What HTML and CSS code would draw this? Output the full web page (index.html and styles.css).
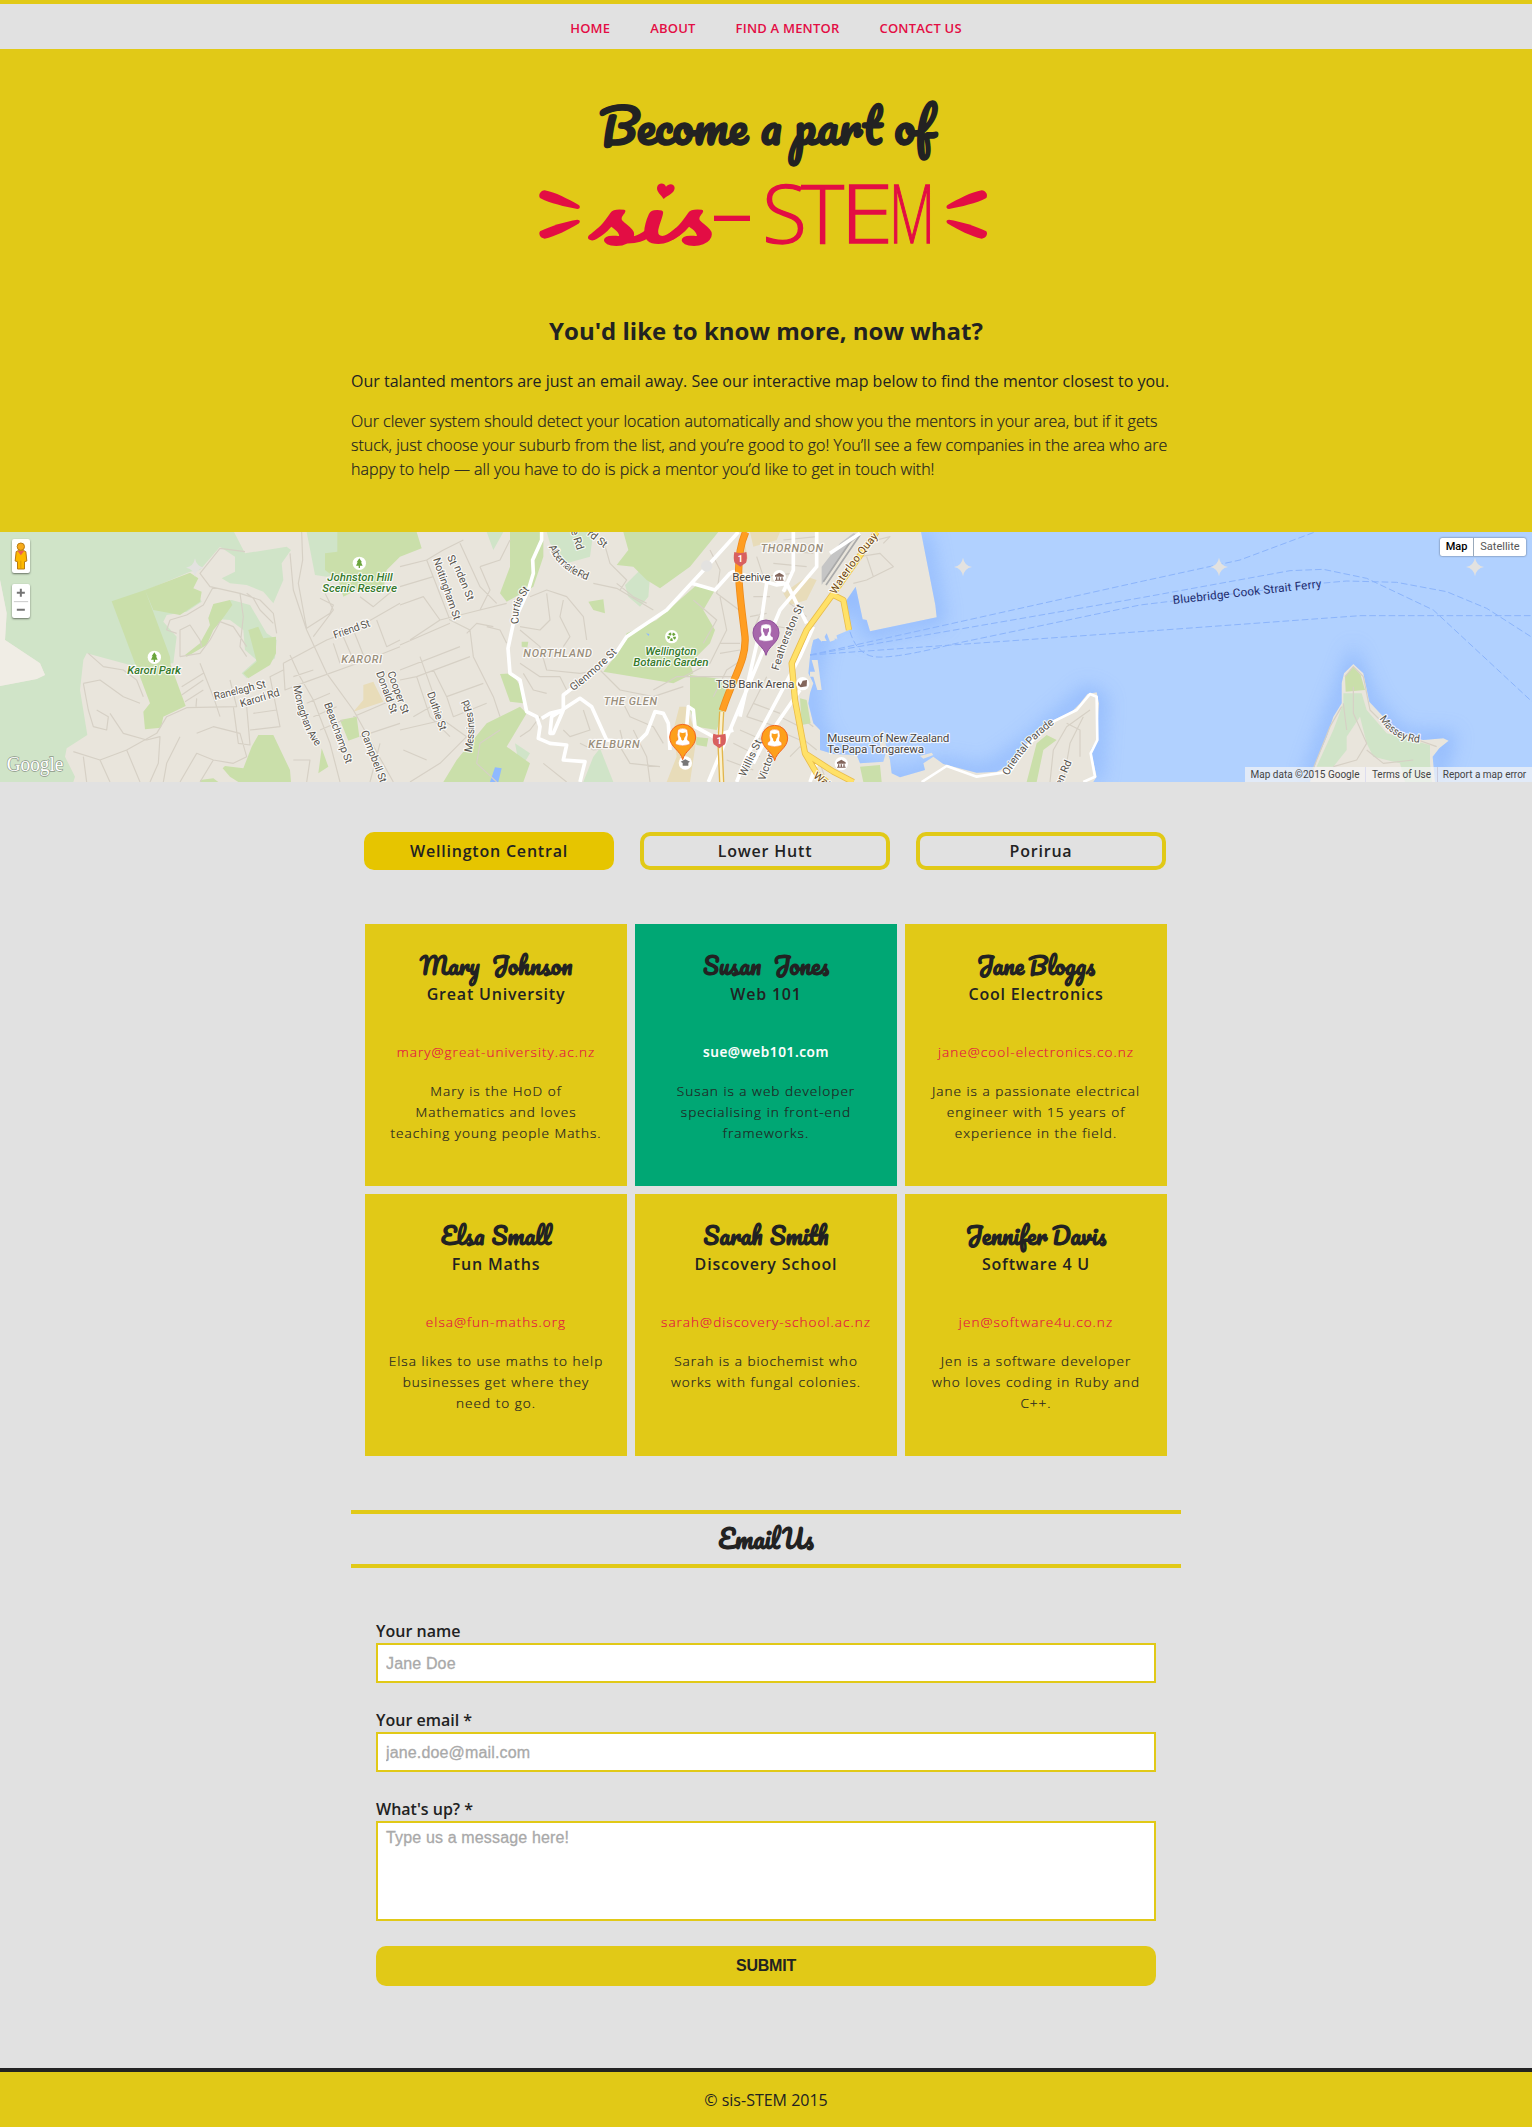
FILE: index.html
```html
<!DOCTYPE html>
<html lang="en">
<head>
<meta charset="utf-8">
<title>sis-STEM | Find a mentor</title>
<link rel="stylesheet" href="styles.css">
</head>
<body>
<nav class="nav">
  <a class="nav-link" href="#">HOME</a>
  <a class="nav-link" href="#">ABOUT</a>
  <a class="nav-link" href="#">FIND A MENTOR</a>
  <a class="nav-link" href="#">CONTACT US</a>
</nav>

<header class="hero">
  <h1 class="hero-title">Become a part of</h1>
  <svg class="logo" viewBox="96 510 1404 255" role="img" aria-label="sis-STEM">
    <g class="logo-shape">
      <path d="M134 571C122 572 114 584 120 594C150 610 195 620 232 627C242 626 241 617 235 614C205 598 165 576 134 571Z"/>
      <path d="M134 716C122 715 114 703 120 694C150 678 195 665 232 659C242 660 241 667 235 671C205 689 165 709 134 716Z"/>
      <path d="M1445 571C1457 572 1465 584 1459 594C1429 610 1384 620 1347 627C1337 626 1338 617 1344 614C1374 598 1414 576 1445 571Z"/>
      <path d="M1445 716C1457 715 1465 703 1459 694C1429 678 1384 665 1347 659C1337 660 1338 667 1344 671C1374 689 1414 709 1445 716Z"/>
      <path d="M491 597C483 584 470 576 471 563C473 548 493 546 498 560C505 549 524 550 524 564C523 580 504 585 491 597Z"/>
      <rect x="642" y="647" width="108" height="16"/>
    </g>
    <text class="logo-script" x="268" y="732" textLength="370" lengthAdjust="spacingAndGlyphs">sıs</text>
    <g class="logo-caps">
      <text x="787 904" y="729">ST</text>
      <text x="1020" y="729" textLength="160" lengthAdjust="spacingAndGlyphs">E</text>
      <text x="1167" y="729" textLength="138" lengthAdjust="spacingAndGlyphs">M</text>
    </g>
  </svg>
  <div class="hero-copy">
    <h2 class="hero-subtitle">You'd like to know more, now what?</h2>
    <p class="hero-lead">Our talanted mentors are just an email away. See our interactive map below to find the mentor closest to you.</p>
    <p class="hero-text">Our clever system should detect your location automatically and show you the mentors in your area, but if it gets stuck, just choose your suburb from the list, and you’re good to go! You’ll see a few companies in the area who are happy to help — all you have to do is pick a mentor you’d like to get in touch with!</p>
  </div>
</header>

<section class="map">
  <svg class="map-canvas" viewBox="0 6 4596 750" preserveAspectRatio="none">
    <defs>
      <filter id="shore" x="-20%" y="-20%" width="140%" height="140%"><feGaussianBlur stdDeviation="28"/></filter>
      <g id="tree"><circle r="20" fill="#fff"/><path d="M0-15L8-3H5L10 7H2V14H-2V7H-10L-5-3H-8Z" fill="#6ba53c"/></g>
      <g id="shield"><path d="M-18-20Q0-14 18-20Q22 0 17 12Q8 18 0 24Q-8 18-17 12Q-22 0-18-20Z" fill="#d8605f"/><text class="shield-no" y="10">1</text></g>
      <g id="museum"><circle r="20" fill="#fff"/><path d="M-13-4L0-12L13-4V0H-13ZM-10 2H-6V9H-10ZM-2 2H2V9H-2ZM6 2H10V9H6ZM-13 9H13V12H-13Z" fill="#83665c"/></g>
      <g id="pin"><path d="M0 64C-6 36-39 27-39-4A39 38 0 0 1 39-4C39 27 6 36 0 64Z" stroke-width="3"/><path d="M-14-26Q0-34 14-26Q18-10 14 0Q12 6 21 10V18Q0 26-21 18V10Q-12 6-14 0Q-18-10-14-26Z" fill="#fff"/><path class="pin-face" d="M-9-18Q0-14 9-18L9-8Q4-2 4 4L0 7L-4 4Q-4-2-9-8Z"/></g>
      <path id="star" d="M0-28Q4-4 27 0Q4 4 0 28Q-4 4-27 0Q-4-4 0-28Z" fill="#e3e2e0"/>
      <path id="albemarle" d="M1646 50Q1680 130 1785 158"/>
      <path id="curtis" d="M1558 280Q1545 230 1595 172"/>
      <path id="glenmore" d="M1720 484Q1790 430 1856 364"/>
      <path id="monaghan" d="M880 468Q900 590 950 652"/>
      <path id="messines" d="M1414 668Q1436 570 1400 500"/>
      <path id="feather" d="M2336 422Q2360 330 2415 222"/>
      <path id="quay" d="M2508 194Q2540 130 2640 14"/>
      <path id="oriental" d="M3024 738Q3080 640 3168 578"/>
      <path id="massey" d="M4138 566Q4180 635 4264 638"/>
      <path id="ferry" d="M3520 222L3970 172"/>
    </defs>

    <rect class="land" y="6" width="4596" height="750"/>

    <!-- hills -->
    <path class="hill" d="M0 6H702L735 70L860 50L873 60L845 100L850 150L820 220L790 185L740 165L690 160L665 145L705 125L705 80L660 50L600 120L570 125L440 180L590 190L605 215L560 245L500 255L490 275L530 320L520 400L390 405L260 370L250 390L240 480L262 615L200 655L195 680L225 740L220 756H0ZM0 150L20 250L15 330L120 400L135 435L110 447L0 468Z" fill-rule="evenodd"/>
    <path class="hill" d="M695 210L750 225L800 310L830 330L825 385L740 445L725 430L770 390L735 360L730 300L690 270L625 265L640 225ZM920 6H1020V130L980 140L945 135ZM1640 6H1780L1770 80L1700 100L1670 60L1650 40ZM1875 165L1920 120L1950 140L1945 200L1920 230L1885 200ZM1780 680L1800 655L1840 756H1750ZM1545 640L1590 670L1560 720ZM1460 6H1510L1480 60Z"/>
    <path class="pale" d="M0 150L20 250L15 330L120 400L135 435L110 447L0 468Z"/>

    <!-- parks -->
    <path class="park" d="M335 214L435 180L510 380L512 405L557 528L490 560L483 593L435 598L430 545L450 520ZM435 180L570 128L595 145L580 175L605 185L600 215L540 255L460 240ZM640 222L690 210L697 225L665 270L640 300L620 345L560 380L555 375L600 340L630 285L625 265ZM745 300L775 290L790 325L828 320V370L810 405L745 445L730 430L770 395ZM775 615H820L870 720L873 756H715L690 740L668 715L675 708L730 715L755 650ZM1012 6H1200V80L1160 120L1150 180L1080 175L1030 200L1015 150L975 120V70L1012 65ZM1020 570L1070 560L1078 620L1045 632ZM965 655L985 710L955 730ZM600 750L640 745L655 756H600Z"/>
    <path class="park" d="M1200 6H1250L1265 55L1200 80ZM1530 6H1630V80L1600 170L1520 215L1500 190L1530 110ZM1870 6H2155L2070 110L1980 175L1940 150L1900 110L1850 105L1885 60ZM1765 215L1810 208L1815 250L1780 240ZM2090 165L2145 180L2110 240L2145 300L2130 340L2070 400L2080 430L2020 460L1810 425L1860 360L1880 310L1970 270ZM1500 432L1535 430L1570 480V520L1530 515ZM2070 435L2190 450L2185 500L2150 600L2090 590L2070 540ZM1330 756L1370 690L1460 580L1560 530L1580 550L1520 650L1590 700L1570 756ZM2080 620L2125 625L2120 650L2090 645ZM1565 335L1585 335L1582 352L1565 350Z"/>
    <path class="built" d="M1090 465L1120 455L1150 515L1060 545L1090 510ZM2038 530L2060 530L2090 620L2070 756H2000L2030 680L2020 600ZM2250 6H2340L2330 30L2260 50ZM2350 190L2420 140L2450 150L2420 210L2370 225ZM2230 20L2245 90L2230 70Z"/>
    <path class="lake" d="M1470 756L1485 712L1505 715L1495 756ZM1938 310L1948 312L1946 318Z"/>

    <!-- minor streets -->
    <path class="lane" d="M735 65L660 55L600 130L630 170L720 190L730 260L720 350L740 380M720 190L780 210L820 250L830 310M870 70L880 180L900 240L920 300L980 430L1060 540L1180 756M905 6L908 90L895 160L915 270L920 295L990 250L1000 225L960 205M850 400L980 330L1060 300L1200 220M870 375L900 440L940 510L990 640L1020 756M850 400L855 480L920 455L1100 390L1200 350M700 530L715 640L750 645L740 530M540 380L600 370L630 330L660 275L700 290L740 350M540 380L540 300L570 285L600 330L605 350M600 400L640 500L660 560M690 450L710 530L560 533L500 560L470 610L380 660L300 690L220 665M265 370L310 410L370 420L410 450L430 500M250 460L300 450L370 500L420 520M250 460L265 540L280 590L320 600L325 560L290 540M330 550L370 610L440 630L480 620L475 700L450 756M380 660L420 756M540 620L500 700L490 756M590 610L640 590L720 610L740 680L700 700L640 690L590 670L540 756M830 540L840 590L750 600M830 540L760 550M610 430L545 470M610 450L545 495M610 480L555 515M590 505L588 530M850 420L810 440L830 540M880 440L940 420M920 520L990 490M940 560L1010 530M960 600L1030 570M1080 620L1200 580M1060 560L1200 500M1140 640L1110 756M975 190L1000 240L940 320M1130 270L1160 350L1200 330M1060 300L1100 400M1030 320L1060 390M1000 340L1020 400M1080 200L1120 230L1180 180M880 690L930 690L920 756M640 690L600 756M250 680L260 756M300 690L330 756M510 270L560 255L610 225L640 170M510 270L500 300L530 310M740 190L760 205L780 240L820 280"/>
    <path class="lane" d="M1200 110L1280 90L1330 60L1390 30M1200 170L1300 140M1200 225L1270 200L1320 270L1230 330M1280 90L1350 270L1410 300L1420 380L1480 500L1500 560M1320 270L1440 240L1520 220M1350 280L1200 345M1380 350L1200 420M1410 380L1250 440L1200 450M1250 440L1290 560L1350 620M1300 420L1340 500L1450 460M1340 500L1360 560L1460 520M1260 380L1310 520L1240 560M1200 600L1330 570L1400 620L1320 700L1230 756M1210 660L1280 690M1440 110L1470 180L1440 240M1440 110L1500 90L1530 30M1380 40L1440 170L1490 220M1460 290L1500 300L1520 340M1400 310L1430 280L1480 290M1590 200L1640 180L1700 200L1750 260L1760 330M1640 190L1650 270L1620 300L1560 290M1560 300L1620 350L1640 420L1740 430M1690 210L1680 260L1710 320L1690 350M1560 400L1620 440L1680 440L1700 480M1570 430L1600 480L1640 490M1850 160L1900 200L1940 220M1810 30L1830 100L1880 150L1860 180M1780 160L1850 175L1960 240M1740 430L1800 420L1860 480L1960 500L2050 470M1860 500L1890 560L1960 590L1990 640M1750 540L1770 600L1710 620L1690 600M1740 640L1780 660L1860 650L1890 700L1980 710M1900 600L1940 680L1950 756M1860 600L1870 640M1630 700L1700 756M1620 560L1590 600L1560 620M1500 600L1440 640L1430 700L1490 756M2130 60L2160 120L2150 190L2190 220L2230 250M2080 210L2150 270L2110 340M2160 200L2180 300L2130 400L2050 440M2240 380L2180 420L2140 500M2160 340L2220 340M2160 370L2220 360M2270 80L2290 140L2380 130M2250 260L2300 250M2260 200L2310 200M2280 280L2390 300M2300 160L2290 230L2260 300M2260 520L2340 550M2240 560L2330 590M2220 600L2310 640M2200 640L2280 680M2180 690L2260 720M2300 440L2240 560M2340 560L2400 590M2330 600L2400 630M2370 680L2400 650L2460 700M2350 30L2450 20M2330 60L2440 70M2320 100L2420 110M2420 260L2370 220M1960 480L2030 440L2200 440"/>
    <path class="lane" d="M2580 80L2640 70L2680 110L2600 150L2560 160M2650 40L2670 20L2630 30M2600 80L2620 140M3270 540L3200 590L3160 660L3150 756M3250 560L3210 640L3190 756M3200 580L3240 600L3240 680M2400 560L2440 590M2400 620L2450 660M2460 700L2480 756"/>

    <!-- harbour, drawn over the land with a darker shoreline -->
    <clipPath id="harbour"><path id="water" d="M2763 6L2806 225L2810 262L2610 304L2600 270L2588 268L2567 170L2540 210L2528 230L2547 300L2500 320L2505 330L2520 325L2490 335L2480 310L2465 335L2455 325L2440 330L2435 350L2430 380L2425 430L2440 460L2430 490L2425 520L2440 580L2460 600L2460 660L2500 672L2570 675L2580 700L2650 695L2660 660L2670 690L2675 730L2700 742L2775 720L2770 700L2800 680L2830 702L2930 728L2990 725L3040 700L3080 640L3160 570L3215 545L3240 520L3262 492L3290 487L3297 520L3290 630L3272 660L3290 740L3280 756H3930L3950 690L3980 620L4000 560L4025 520V460L4032 430L4060 402L4090 430L4108 515L4150 560L4180 610L4270 630L4330 625L4346 632L4318 655L4298 680L4305 756H4596V6Z"/></clipPath>
    <use href="#water" fill="#b1d1ff"/>
    <g clip-path="url(#harbour)"><path class="shore" d="M2763 6L2810 262L2610 304L2567 170L2460 310L2430 450L2440 580L2500 690L2700 750L2830 710L2960 735L3080 650L3262 492L3297 510L3280 756M3930 756L4000 560L4060 402L4110 520L4200 625L4340 630L4300 756" filter="url(#shore)"/></g>
    <path class="land" d="M2435 390H2453L2465 480H2452L2440 440H2430V425H2445ZM2445 300L2460 295L2480 333H2466ZM2480 270L2492 250L2512 326H2495ZM2640 610L2650 600L2660 660H2640Z"/>
    <path class="land" d="M2760 678L2795 668L2800 675L2770 686Z"/>
    <path class="park" d="M2400 505L2420 510L2432 580L2405 585ZM3110 640L3140 615L3170 630L3130 660L3110 756H3080ZM4035 440L4060 410L4082 435L4095 480L4037 485ZM2580 710L2640 705L2645 756H2590Z"/>
    <path class="hill" d="M4030 490H4085L4100 540L4160 610L4290 645L4290 700L4296 756H4215L4200 700L4120 680L4100 640L4080 560L4040 620L4040 660L4000 710H3950L4000 600L4030 520Z"/>
    <path class="lane" d="M4035 440L4060 410L4090 440L4110 540L4170 600L4310 650M4025 530L3990 590L3930 740M4060 470V550L4100 640L4070 690L4000 710M4030 520L4040 600M4100 660L4150 700L4240 690"/>
    <path d="M2465 165L2540 50L2580 15L2560 10L2520 40L2465 110Z" fill="#c5c5c5"/>
    <path d="M2470 155L2565 15M2478 165L2580 15" fill="none" stroke="#aaa" stroke-width="5"/>

    <!-- main roads -->
    <path class="road" d="M1625 6V30L1598 90L1600 130L1585 180L1540 280L1524 355L1530 430L1560 450L1580 545L1610 560L1620 590L1615 625L1650 640L1700 645L1690 690L1755 695L1740 756M2215 6L2130 100L2000 240L1880 320L1840 380L1690 495V540L1650 550L1625 565M1690 540L1660 610H1650L1655 560L1740 505L1775 530L1820 630L1910 640L1940 610L1965 545L1990 550L2005 580L2010 660M2060 590L2065 530L2080 540L2085 590L2140 620L2200 600M2075 160L2145 180L2190 130L2200 125L2330 165L2360 160L2420 280M2380 6V120L2350 185M2450 6V110L2340 240L2240 480L2125 756M2490 70L2580 10M2300 160L2280 300L2220 560M2440 290L2400 380L2240 680L2210 756M2400 480L2290 640L2260 700M2450 700L2430 756"/>
    <path class="road-thin" d="M2765 756L2840 708L2930 740L3030 725L3090 640L3160 575L3230 540L3270 492L3290 500L3292 630L3272 670L3285 740L3250 756"/>
    <path d="M2165 545L2160 640L2165 756" class="gold-case"/><path d="M2165 545L2160 640L2165 756" class="gold-mid"/>
    <path class="yellow-case" d="M2630 6L2500 190L2420 300L2375 400L2385 510L2415 670L2450 730L2480 756M2415 670L2500 725L2560 756M2500 195L2530 210L2547 300"/>
    <path class="yellow" d="M2630 6L2500 190L2420 300L2375 400L2385 510L2415 670L2450 730L2480 756M2415 670L2500 725L2560 756M2500 195L2530 210L2547 300"/>
    <path class="highway-case" d="M2237 6C2200 90 2220 190 2235 320C2240 390 2200 440 2167 542"/>
    <path class="highway" d="M2237 6C2200 90 2220 190 2235 320C2240 390 2200 440 2167 542"/>

    <!-- ferry routes -->
    <path class="route" d="M2430 375L3430 153L3720 90L3945 6M2430 375L3430 202L3870 122L3970 118L4100 145L4300 240L4596 515M2550 305Q2570 370 2620 380Q2680 388 2860 342L3420 225L3960 160L4040 153L4190 157L4340 185L4460 235L4596 322M2430 375L3420 305L4080 257H4596"/>

    <!-- labels -->
    <g class="lbl street">
      <text textLength="115" transform="translate(1004 326) rotate(-19)">Friend St</text>
      <text textLength="160" transform="translate(644 510) rotate(-14)">Ranelagh St</text>
      <text textLength="122" transform="translate(724 532) rotate(-17)">Karori Rd</text>
      <text><textPath href="#monaghan" textLength="196">Monaghan Ave</textPath></text>
      <text textLength="192" transform="translate(972 522) rotate(70)">Beauchamp St</text>
      <text textLength="165" transform="translate(1082 606) rotate(69)">Campbell St</text>
      <text textLength="132" transform="translate(1128 428) rotate(70)">Donald St</text>
      <text textLength="134" transform="translate(1162 428) rotate(70)">Cooper St</text>
      <text textLength="194" transform="translate(1299 88) rotate(71)">Nottingham St</text>
      <text transform="translate(1341 80) rotate(68)">St</text>
      <text textLength="110" transform="translate(1362 112) rotate(68)">nden St</text>
      <text textLength="120" transform="translate(1281 490) rotate(71)">Duthie St</text>
      <text transform="translate(1712 2) rotate(72)">e Rd</text>
      <text transform="translate(1760 14) rotate(38)">rd St</text>
      <text><textPath href="#albemarle" textLength="158">Albemarle Rd</textPath></text>
      <text><textPath href="#curtis" textLength="110">Curtis St</textPath></text>
      <text><textPath href="#glenmore" textLength="176">Glenmore St</textPath></text>
      <text><textPath href="#messines" textLength="164">Messines Rd</textPath></text>
      <text><textPath href="#feather" textLength="208">Featherston St</textPath></text>
      <text class="amber"><textPath href="#quay" textLength="216">Waterloo Quay</textPath></text>
      <text><textPath href="#oriental" textLength="212">Oriental Parade</textPath></text>
      <text><textPath href="#massey" textLength="146">Massey Rd</textPath></text>
      <text textLength="118" transform="translate(2236 742) rotate(-65)">Willis St</text>
      <text transform="translate(2294 754) rotate(-70)">Victoria</text>
      <text transform="translate(3184 770) rotate(-67)">en Rd</text>
      <text class="amber" transform="translate(2438 742) rotate(36)">Wate</text>
    </g>
    <g class="lbl suburb">
      <text x="1024" y="398" textLength="122">KARORI</text>
      <text x="1570" y="381" textLength="206">NORTHLAND</text>
      <text x="1811" y="524" textLength="160">THE GLEN</text>
      <text x="1765" y="655" textLength="154">KELBURN</text>
      <text x="2282" y="66" textLength="187">THORNDON</text>
    </g>
    <g class="lbl green">
      <text x="982" y="152" textLength="196">Johnston Hill</text>
      <text x="967" y="185" textLength="224">Scenic Reserve</text>
      <text x="382" y="433" textLength="161">Karori Park</text>
      <text x="1936" y="374" textLength="154">Wellington</text>
      <text x="1900" y="407" textLength="226">Botanic Garden</text>
    </g>
    <g class="lbl poi">
      <text x="2197" y="152" textLength="114">Beehive</text>
      <text x="2147" y="473" textLength="236">TSB Bank Arena</text>
      <text x="2482" y="636" textLength="366">Museum of New Zealand</text>
      <text x="2482" y="669" textLength="290">Te Papa Tongarewa</text>
    </g>
    <text class="ferry-label"><textPath href="#ferry" textLength="448">Bluebridge Cook Strait Ferry</textPath></text>

    <use href="#tree" x="1078" y="100"/>
    <use href="#tree" x="463" y="382"/>
    <circle cx="2015" cy="320" r="20" fill="#fff"/><circle cx="2015" cy="320" r="9" fill="none" stroke="#6ba53c" stroke-width="8" stroke-dasharray="7 4"/>
    <use href="#museum" x="2338" y="140"/>
    <use href="#museum" x="2524" y="701"/>
    <circle cx="2408" cy="461" r="20" fill="#fff"/><path d="M2394 455L2402 465L2408 452L2421 450L2420 469L2402 472L2394 466Z" fill="#83665c"/>
    <circle cx="2056" cy="699" r="20" fill="#fff"/><path d="M2042 695L2056 688L2070 695L2065 698V707H2048V699Z" fill="#777"/>
    <use href="#shield" x="2221" y="86"/><use href="#shield" x="2158" y="631"/>
    <use href="#pin" x="2298" y="312" class="pin-purple"/>
    <use href="#pin" x="2048" y="625" class="pin-orange"/>
    <use href="#pin" x="2324" y="628" class="pin-orange"/>
    <use href="#star" x="2889" y="111"/><use href="#star" x="3657" y="111"/><use href="#star" x="4425" y="111"/><use href="#star" x="585" y="113"/>
    <circle cx="2120" cy="108" r="17" fill="#e3e2e0"/>
    <text class="google" x="20" y="722" textLength="170" lengthAdjust="spacingAndGlyphs">Google</text>
  </svg>

  <div class="map-zoom">
    <div class="pegman">
      <svg viewBox="0 0 51 102"><path d="M11 38Q25 28 40 38L43 66L36 68L36 90H15V68L8 66Z" fill="#fdb900" stroke="#b97b13" stroke-width="3"/><circle cx="25" cy="23" r="11" fill="#f7ab1c" stroke="#b97b13" stroke-width="3"/><path d="M15 36H35L25 49Z" fill="#ea5f55"/><path d="M25 65V88" stroke="#c98a0b" stroke-width="2"/></svg>
    </div>
    <div class="zoom-box">
      <svg viewBox="0 0 51 102"><path d="M13 26H37M25 14V38M13 77H37" stroke="#747474" stroke-width="6"/><path d="M4 53H47" stroke="#c9c9c9" stroke-width="3"/></svg>
    </div>
  </div>
  <div class="map-type"><span class="type-map">Map</span><span class="type-sat">Satellite</span></div>
  <div class="map-legal"><span class="legal-data">Map data ©2015 Google</span><span class="legal-terms">Terms of Use</span><span class="legal-report">Report a map error</span></div>
</section>

<main class="content">
  <div class="tabs">
    <a class="tab tab-active" href="#">Wellington Central</a>
    <a class="tab" href="#">Lower Hutt</a>
    <a class="tab" href="#">Porirua</a>
  </div>

  <div class="cards">
    <article class="card">
      <h3 class="name name-wide">Mary Johnson</h3>
      <h4 class="company">Great University</h4>
      <a class="email" href="#">mary@great-university.ac.nz</a>
      <p class="bio">Mary is the HoD of Mathematics and loves teaching young people Maths.</p>
    </article>
    <article class="card card-active">
      <h3 class="name name-wide">Susan Jones</h3>
      <h4 class="company">Web 101</h4>
      <a class="email" href="#">sue@web101.com</a>
      <p class="bio">Susan is a web developer specialising in front-end frameworks.</p>
    </article>
    <article class="card">
      <h3 class="name name-tight">Jane Bloggs</h3>
      <h4 class="company">Cool Electronics</h4>
      <a class="email" href="#">jane@cool-electronics.co.nz</a>
      <p class="bio">Jane is a passionate electrical engineer with 15 years of experience in the field.</p>
    </article>
    <article class="card">
      <h3 class="name">Elsa Small</h3>
      <h4 class="company">Fun Maths</h4>
      <a class="email" href="#">elsa@fun-maths.org</a>
      <p class="bio">Elsa likes to use maths to help businesses get where they need to go.</p>
    </article>
    <article class="card">
      <h3 class="name">Sarah Smith</h3>
      <h4 class="company">Discovery School</h4>
      <a class="email" href="#">sarah@discovery-school.ac.nz</a>
      <p class="bio">Sarah is a biochemist who works with fungal colonies.</p>
    </article>
    <article class="card">
      <h3 class="name name-tight">Jennifer Davis</h3>
      <h4 class="company">Software 4 U</h4>
      <a class="email" href="#">jen@software4u.co.nz</a>
      <p class="bio">Jen is a software developer who loves coding in Ruby and C++.</p>
    </article>
  </div>

  <h2 class="form-title">Email Us</h2>

  <form class="form">
    <label class="field"><span class="label">Your name</span><input class="input" type="text" placeholder="Jane Doe"></label>
    <label class="field"><span class="label">Your email *</span><input class="input" type="text" placeholder="jane.doe@mail.com"></label>
    <label class="field"><span class="label">What's up? *</span><textarea class="input message" placeholder="Type us a message here!"></textarea></label>
    <button class="submit" type="button">SUBMIT</button>
  </form>
</main>

<footer class="footer">© sis-STEM 2015</footer>
</body>
</html>
```
FILE: styles.css
```css
* { box-sizing: border-box; }

body {
  margin: 0;
  background: #e1e1e1;
  color: #222;
  font-family: "Open Sans", sans-serif;
  font-size: 16px;
}

h1, h2, h3, h4, p { margin: 0; }
a { text-decoration: none; color: inherit; }

.nav {
  display: flex;
  justify-content: center;
  gap: 40px;
  height: 49px;
  border-top: 4px solid #e1c917;
  color: #e30d44;
  font-size: 13px;
  font-weight: 600;
  letter-spacing: .2px;
  line-height: 48px;
}

.hero {
  height: 483px;
  padding-top: 46px;
  background: #e1c917;
}
.hero-title {
  font: bold 47px/60px Pacifico, "Liberation Serif", cursive;
  text-align: center;
}
.logo { display: block; width: 468px; height: 85px; margin: 15px auto 0; }
.logo-shape { fill: #e30d44; }
.logo-script { font: 220px Pacifico, "Liberation Serif", cursive; fill: #e30d44; }
.logo-caps { font: 300 245px "Open Sans", sans-serif; fill: #e30d44; stroke: #e30d44; stroke-width: 4px; }
.hero-copy { width: 830px; margin: 60px auto 0; }
.hero-subtitle { font-size: 24px; line-height: 32px; font-weight: 700; text-align: center; }
.hero-lead { margin-top: 21.5px; font-size: 16px; line-height: 24px; white-space: nowrap; }
.hero-text { margin-top: 16px; font-size: 16px; line-height: 24px; font-weight: 300; -webkit-text-stroke: .2px; }

.map { position: relative; height: 250px; overflow: hidden; font-family: Roboto, sans-serif; }
.map-canvas { display: block; width: 100%; height: 250px; }
.land { fill: #e9e5dc; }
.hill { fill: #d0e4c8; }
.pale { fill: #f0ede5; }
.park { fill: #cadfaa; }
.built { fill: #e8dcb9; }
.lake { fill: #8fb9ff; }
.lane { fill: none; stroke: #d6d0c5; stroke-width: 3.5; stroke-linejoin: round; }
.road { fill: none; stroke: #fff; stroke-width: 11; stroke-linejoin: round; }
.road-thin { fill: none; stroke: #fff; stroke-width: 8; stroke-linejoin: round; }
.shore { fill: none; stroke: #7ca9fb; stroke-width: 44; opacity: .6; }
.gold-case { fill: none; stroke: #e2b64c; stroke-width: 16; }
.gold-mid { fill: none; stroke: #faf0cf; stroke-width: 8; }
.yellow-case { fill: none; stroke: #e9bd4c; stroke-width: 19; stroke-linejoin: round; }
.yellow { fill: none; stroke: #ffe168; stroke-width: 14; stroke-linejoin: round; }
.highway-case { fill: none; stroke: #ee8c1c; stroke-width: 22; }
.highway { fill: none; stroke: #ff9e22; stroke-width: 17; }
.route { fill: none; stroke: #8bb4fb; stroke-width: 3; stroke-dasharray: 20 9; }
.lbl { font-family: Roboto, sans-serif; paint-order: stroke; stroke: #fff; stroke-opacity: .8; stroke-width: 7px; stroke-linejoin: round; }
.street { font-size: 32px; fill: #57534c; }
.amber { fill: #6b4310; }
.suburb { font-size: 33px; font-style: italic; font-weight: 500; fill: #9a8f7c; }
.green { font-size: 35px; font-style: italic; font-weight: 500; fill: #367a2c; }
.poi { font-size: 35px; fill: #4b4744; }
.ferry-label { font: 35px Roboto, sans-serif; fill: #1e2c6e; }
.shield-no { font: bold 27px Roboto, sans-serif; fill: #fff; text-anchor: middle; }
.pin-purple { fill: #a767ab; stroke: #8f4f9b; }
.pin-orange { fill: #fda01b; stroke: #f26522; }
.pin-face { stroke: none; }
.google { font: 62px "Liberation Serif", serif; fill: #fff; stroke: #8e998a; stroke-width: 4px; paint-order: stroke; }

.map-zoom { position: absolute; left: 12px; top: 7px; display: flex; flex-direction: column; gap: 11px; }
.pegman, .zoom-box { width: 18px; height: 34px; background: #fff; border-radius: 2px; box-shadow: 0 1px 2px rgba(0, 0, 0, .5); }
.pegman svg, .zoom-box svg { display: block; width: 18px; height: 34px; }
.map-type {
  position: absolute; right: 6px; top: 6px;
  display: flex;
  height: 18px;
  background: #fff;
  border-radius: 2px;
  box-shadow: 0 0 2px rgba(0, 0, 0, .6);
  font-size: 11px;
  line-height: 18px;
  text-align: center;
}
.type-map { width: 34px; font-weight: 500; color: #000; border-right: 1px solid #9ab; }
.type-sat { width: 52px; color: #565656; }
.map-legal {
  position: absolute; right: 0; bottom: 0;
  display: flex;
  width: 287px;
  height: 15px;
  background: rgba(245, 245, 245, .7);
  font-size: 10px;
  line-height: 15px;
  text-align: center;
  color: #444;
  white-space: nowrap;
}
.legal-data { width: 120px; }
.legal-terms { width: 72px; border-left: 1px solid #dde; }
.legal-report { width: 94px; border-left: 1px solid #ccd; }

.content { width: 830px; height: 1286px; margin: 0 auto; padding-top: 50px; }
.tabs { display: flex; gap: 26px; padding-left: 13px; }
.tab {
  width: 250px;
  height: 38px;
  border: 4px solid #e1c917;
  border-radius: 10px;
  font-weight: 600;
  letter-spacing: .8px;
  line-height: 30px;
  text-align: center;
}
.tab-active { background: #e6c500; border-color: #e6c500; }

.cards {
  display: grid;
  grid-template-columns: repeat(3, 262px);
  grid-auto-rows: 262px;
  gap: 8px;
  margin: 54px 0 0 14px;
}
.card { padding: 26px 20px 0; background: #e1c917; text-align: center; letter-spacing: 1px; }
.card-active { background: #00a774; }
.name { font: bold 23px/30px Pacifico, "Liberation Serif", cursive; letter-spacing: 0; word-spacing: 1px; white-space: nowrap; }
.name-wide { word-spacing: 6px; }
.name-tight { word-spacing: -2px; }
.company { margin-top: 3px; font-size: 16px; line-height: 22px; font-weight: 600; letter-spacing: .8px; }
.email { display: block; margin: 36px -10px 0; font-size: 13.6px; line-height: 21px; font-weight: 300; color: #e30d44; -webkit-text-stroke: .15px; }
.card-active .email { color: #fff; font-weight: 600; letter-spacing: .6px; }
.bio { margin-top: 18px; font-size: 13.6px; line-height: 21px; font-weight: 300; -webkit-text-stroke: .2px; }

.form-title {
  height: 58px;
  margin-top: 54px;
  border: solid #e1c917;
  border-width: 4px 0;
  font: bold 24.5px/50px Pacifico, "Liberation Serif", cursive;
  word-spacing: -4px;
  text-align: center;
}

.form { display: flex; flex-direction: column; width: 780px; margin: 51px auto 0; }
.field { display: flex; flex-direction: column; height: 89px; }
.label { font-size: 16px; line-height: 24px; font-weight: 600; }
.input {
  display: block;
  width: 780px;
  height: 40px;
  margin: 0;
  padding: 2px 8px 0;
  border: 2px solid #e1c917;
  border-radius: 0;
  background: #fff;
  font: 16px "Liberation Sans", sans-serif;
  letter-spacing: .15px;
  resize: none;
  outline: none;
}
.input::placeholder { color: #a9a9a9; opacity: 1; -webkit-text-stroke: .3px; }
.message { flex: none; height: 100px; padding-top: 6px; }
.submit {
  height: 40px;
  margin-top: 60px;
  padding: 0;
  border: 0;
  border-radius: 10px;
  background: #e1c917;
  color: #222;
  font: bold 16px "Liberation Sans", sans-serif;
  letter-spacing: -.2px;
}

.footer {
  height: 59px;
  border-top: 4px solid #222;
  background: #e1c917;
  font-size: 16px;
  line-height: 56px;
  overflow: hidden;
  text-align: center;
}
```
